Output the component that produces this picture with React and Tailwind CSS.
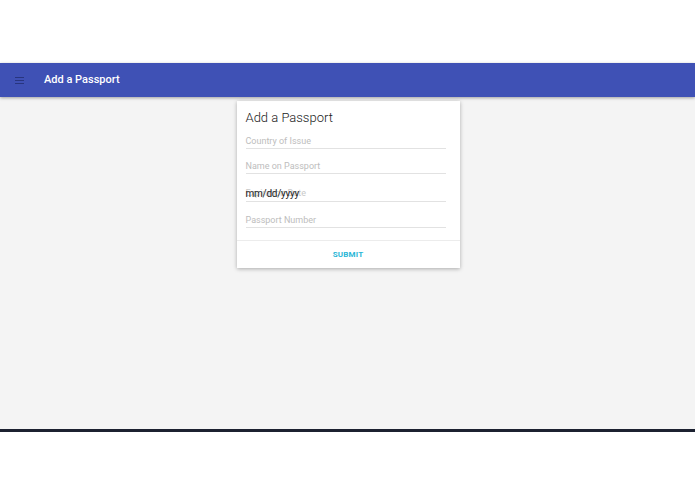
import React from 'react';

const Field = ({ placeholder, date, last }) => (
    <div className={`relative ${last ? 'h-[26px]' : 'h-[25px]'} border-b border-[#e2e2e2] flex items-end pb-[2px]`}>
        {date ? (
            <div className="relative text-[9px] leading-none pb-[1px]">
                <span className="text-[#c8c8c8]">Expiration Date</span>
                <span className="absolute left-0 top-0 text-[#222] text-[10px] tracking-tight">mm/dd/yyyy</span>
            </div>
        ) : (
            <span className="text-[9px] leading-none text-[#bdbdbd]">{placeholder}</span>
        )}
    </div>
);

export default function App() {
    return (
        <div className="w-[695px] h-[494px] bg-white flex flex-col font-['Roboto',sans-serif]">
            <div className="h-[63px]" />
            {/* App bar */}
            <div className="h-[34px] bg-[#3f51b5] flex items-center shadow-[0_1px_3px_rgba(0,0,0,0.35)] z-10">
                <div className="w-[44px] flex justify-center pr-[6px]">
                    <div className="flex flex-col gap-[2px]">
                        <div className="w-[9px] h-px bg-[#28357f]" />
                        <div className="w-[9px] h-px bg-[#28357f]" />
                        <div className="w-[9px] h-px bg-[#28357f]" />
                    </div>
                </div>
                <span className="text-white text-[11px] font-medium">Add a Passport</span>
            </div>
            {/* Content */}
            <div className="h-[332px] bg-[#f4f4f4] flex justify-center pt-[4px] pl-[1px]">
                <div className="w-[223px] h-[167px] bg-white shadow-[0_1px_4px_rgba(0,0,0,0.3)] flex flex-col">
                    <div className="px-[9px] pt-[9px]">
                        <div className="text-[13px] font-light text-[#1a1a1a] leading-none pt-[1px]">Add a Passport</div>
                        <div className="mr-[5px]">
                            <Field placeholder="Country of Issue" />
                            <Field placeholder="Name on Passport" />
                            <div className="h-[3px]" />
                            <Field date />
                            <Field placeholder="Passport Number" last />
                        </div>
                    </div>
                    <div className="mt-[12px] border-t border-[#ececec] flex-1 flex items-center justify-center">
                        <span className="text-[8px] font-bold text-[#29b6d6] tracking-wide">SUBMIT</span>
                    </div>
                </div>
            </div>
            <div className="h-[3px] bg-[#1c2130]" />
            <div className="flex-1 bg-white" />
        </div>
    );
}
